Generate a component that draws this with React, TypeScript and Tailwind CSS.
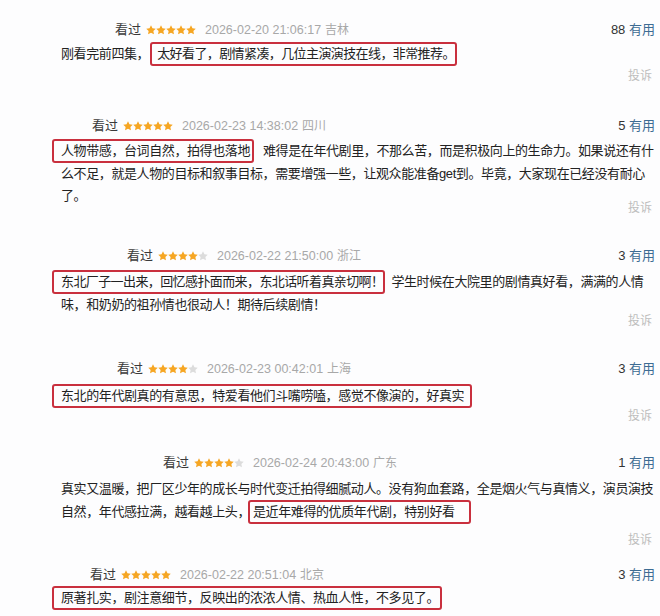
import React from "react";

type Part = { t: string; box?: boolean; pre?: string };

type Review = {
  indent: string;
  stars: number;
  date: string;
  loc: string;
  useful: number;
  height: string;
  bodyGap: string;
  reportGap: string;
  lines: Part[][];
  report: boolean;
};

// 評論データ — 各行は参照画像の折り返し位置に合わせて手で分けてある
const reviews: Review[] = [
  {
    indent: "pl-[115px]",
    stars: 5,
    date: "2026-02-20 21:06:17",
    loc: "吉林",
    useful: 88,
    height: "h-[96px]",
    bodyGap: "mt-[2px]",
    reportGap: "mt-[2px]",
    report: true,
    lines: [
      [
        { t: "刚看完前四集，" },
        { t: "太好看了，剧情紧凑，几位主演演技在线，非常推荐。", box: true, pre: "ml-[1px] pl-[5px] pr-0 tracking-[-0.6px]" },
      ],
    ],
  },
  {
    indent: "pl-[92px]",
    stars: 5,
    date: "2026-02-23 14:38:02",
    loc: "四川",
    useful: 5,
    height: "h-[130px]",
    bodyGap: "mt-[3px]",
    reportGap: "-mt-[7px]",
    report: true,
    lines: [
      [
        { t: "人物带感，台词自然，拍得也落地", box: true, pre: "-ml-[9px] pl-[7px] pr-[2px] mr-[9px]" },
        { t: "难得是在年代剧里，不那么苦，而是积极向上的生命力。如果说还有什" },
      ],
      [{ t: "么不足，就是人物的目标和叙事目标，需要增强一些，让观众能准备get到。毕竟，大家现在已经没有耐心" }],
      [{ t: "了。" }],
    ],
  },
  {
    indent: "pl-[127px]",
    stars: 4,
    date: "2026-02-22 21:50:00",
    loc: "浙江",
    useful: 3,
    height: "h-[113px]",
    bodyGap: "mt-[4px]",
    reportGap: "-mt-[3px]",
    report: true,
    lines: [
      [
        { t: "东北厂子一出来，回忆感扑面而来，东北话听着真亲切啊！", box: true, pre: "-ml-[9px] pl-[7px] pr-0 mr-[6px] tracking-[-0.6px]" },
        { t: "学生时候在大院里的剧情真好看，满满的人情" },
      ],
      [{ t: "味，和奶奶的祖孙情也很动人！期待后续剧情！" }],
    ],
  },
  {
    indent: "pl-[117px]",
    stars: 4,
    date: "2026-02-23 00:42:01",
    loc: "上海",
    useful: 3,
    height: "h-[94px]",
    bodyGap: "mt-[5px]",
    reportGap: "mt-0",
    report: true,
    lines: [
      [{ t: "东北的年代剧真的有意思，特爱看他们斗嘴唠嗑，感觉不像演的，好真实", box: true, pre: "-ml-[9px] pl-[7px] pr-[6px]" }],
    ],
  },
  {
    indent: "pl-[163px]",
    stars: 4,
    date: "2026-02-24 20:43:00",
    loc: "广东",
    useful: 1,
    height: "h-[112px]",
    bodyGap: "mt-[5px]",
    reportGap: "mt-[8px]",
    report: true,
    lines: [
      [{ t: "真实又温暖，把厂区少年的成长与时代变迁拍得细腻动人。没有狗血套路，全是烟火气与真情义，演员演技" }],
      [
        { t: "自然，年代感拉满，越看越上头，" },
        { t: "是近年难得的优质年代剧，特别好看", box: true, pre: "-ml-[2px] pl-[3px] pr-[14px]" },
      ],
    ],
  },
  {
    indent: "pl-[90px]",
    stars: 5,
    date: "2026-02-22 20:51:04",
    loc: "北京",
    useful: 3,
    height: "h-[51px]",
    bodyGap: "mt-[1px]",
    reportGap: "mt-0",
    report: false,
    lines: [
      [{ t: "原著扎实，剧注意细节，反映出的浓浓人情、热血人性，不多见了。", box: true, pre: "-ml-[9px] pl-[7px] pr-[1px]" }],
    ],
  },
];

function Star({ on }: { on: boolean }) {
  return (
    <svg width="10" height="10" viewBox="0 0 24 24" className="shrink-0">
      <path
        d="M12 0.5l3.5 7.2 7.9 1.1-5.7 5.5 1.4 7.9L12 18.5l-7.1 3.7 1.4-7.9L0.6 8.8l7.9-1.1z"
        fill={on ? "#f6a623" : "#dcdcdc"}
      />
    </svg>
  );
}

function ReviewItem({ r }: { r: Review }) {
  return (
    <div className={`${r.height} flex flex-col`}>
      {/* ヘッダー */}
      <div className={`h-[20px] flex items-center ${r.indent} pr-[5px]`}>
        <span className="text-[13px] text-[#3a3a3a]">看过</span>
        <span className="ml-[5px] flex">
          {[0, 1, 2, 3, 4].map((i) => (
            <Star key={i} on={i < r.stars} />
          ))}
        </span>
        <span className="ml-[9px] text-[12.5px] text-[#a8a8a8]">{r.date}</span>
        <span className="ml-[4px] text-[12px] text-[#a8a8a8]">{r.loc}</span>
        <span className="ml-auto text-[13px] text-[#333]">
          {r.useful} <span className="text-[#3d6c93]">有用</span>
        </span>
      </div>

      {/* 本文 */}
      <div className={`${r.bodyGap} pl-[61px] text-[13px] leading-[22px] tracking-[-0.4px] text-[#222] whitespace-nowrap`}>
        {r.lines.map((line, i) => (
          <div key={i}>
            {line.map((p, j) =>
              p.box ? (
                <span
                  key={j}
                  className={`inline-block leading-[20px] border-2 border-[#c9303e] rounded-[3px] ${p.pre ?? ""}`}
                >
                  {p.t}
                </span>
              ) : (
                <span key={j}>{p.t}</span>
              )
            )}
          </div>
        ))}
      </div>

      {r.report && (
        <div className={`${r.reportGap} h-[16px] flex justify-end pr-[8px]`}>
          <span className="text-[12px] leading-[16px] text-[#bdbdbd]">投诉</span>
        </div>
      )}
    </div>
  );
}

export default function App() {
  return (
    <div
      className="w-[660px] h-[616px] overflow-hidden bg-[#fdfdfe] pt-[20px]"
      style={{ fontFamily: '"Liberation Sans", "Noto Sans CJK SC", sans-serif' }}
    >
      {reviews.map((r, i) => (
        <ReviewItem key={i} r={r} />
      ))}
    </div>
  );
}
